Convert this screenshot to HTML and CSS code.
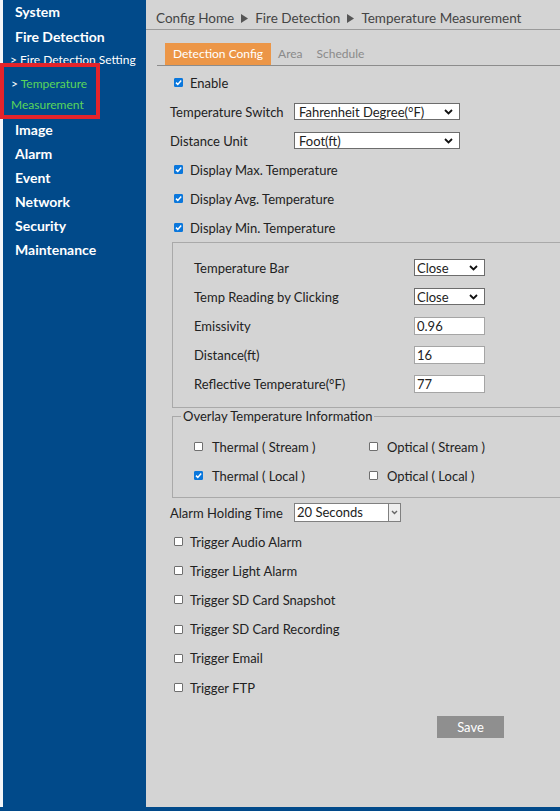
FILE: index.html
```html
<!DOCTYPE html>
<html>
<head>
<meta charset="utf-8">
<link rel="stylesheet" href="styles.css">
</head>
<body>
<div class="page">
  <div class="edge"></div>
  <nav class="sidebar">
    <div class="nav-item nav-first">System</div>
    <div class="nav-item nav-fire">Fire Detection</div>
    <div class="nav-sub">&gt; Fire Detection Setting</div>
    <div class="nav-sub nav-active">&gt; <span class="green">Temperature Measurement</span></div>
    <div class="nav-item nav-image">Image</div>
    <div class="nav-item">Alarm</div>
    <div class="nav-item">Event</div>
    <div class="nav-item">Network</div>
    <div class="nav-item">Security</div>
    <div class="nav-item">Maintenance</div>
  </nav>
  <div class="highlight"></div>
  <main class="content">
    <div class="crumb">
      <span>Config Home</span>
      <svg class="tri" width="7" height="9" viewBox="0 0 7 9"><polygon points="0,0 7,4.5 0,9" fill="#555"/></svg>
      <span>Fire Detection</span>
      <svg class="tri" width="7" height="9" viewBox="0 0 7 9"><polygon points="0,0 7,4.5 0,9" fill="#555"/></svg>
      <span>Temperature Measurement</span>
    </div>
    <div class="tabs">
      <div class="tab tab-active">Detection Config</div>
      <div class="tab">Area</div>
      <div class="tab">Schedule</div>
    </div>
    <div class="form">
      <div class="row"><span class="cb on"><svg width="9" height="9" viewBox="0 0 9 9"><path d="M2 4.6 L3.8 6.4 L7.2 2.6" fill="none" stroke="#fff" stroke-width="1.5"/></svg></span><span class="cbl">Enable</span></div>
      <div class="row"><span class="lbl">Temperature Switch</span><div class="sel sel-wide"><span>Fahrenheit Degree(°F)</span><svg class="chev" width="9" height="6" viewBox="0 0 9 6"><path d="M1 1 L4.5 4.5 L8 1" fill="none" stroke="#111" stroke-width="1.8"/></svg></div></div>
      <div class="row"><span class="lbl">Distance Unit</span><div class="sel sel-wide"><span>Foot(ft)</span><svg class="chev" width="9" height="6" viewBox="0 0 9 6"><path d="M1 1 L4.5 4.5 L8 1" fill="none" stroke="#111" stroke-width="1.8"/></svg></div></div>
      <div class="row"><span class="cb on"><svg width="9" height="9" viewBox="0 0 9 9"><path d="M2 4.6 L3.8 6.4 L7.2 2.6" fill="none" stroke="#fff" stroke-width="1.5"/></svg></span><span class="cbl">Display Max. Temperature</span></div>
      <div class="row"><span class="cb on"><svg width="9" height="9" viewBox="0 0 9 9"><path d="M2 4.6 L3.8 6.4 L7.2 2.6" fill="none" stroke="#fff" stroke-width="1.5"/></svg></span><span class="cbl">Display Avg. Temperature</span></div>
      <div class="row"><span class="cb on"><svg width="9" height="9" viewBox="0 0 9 9"><path d="M2 4.6 L3.8 6.4 L7.2 2.6" fill="none" stroke="#fff" stroke-width="1.5"/></svg></span><span class="cbl">Display Min. Temperature</span></div>

      <div class="box">
        <div class="row"><span class="lbl2">Temperature Bar</span><div class="sel sel-small"><span>Close</span><svg class="chev" width="9" height="6" viewBox="0 0 9 6"><path d="M1 1 L4.5 4.5 L8 1" fill="none" stroke="#111" stroke-width="1.8"/></svg></div></div>
        <div class="row"><span class="lbl2">Temp Reading by Clicking</span><div class="sel sel-small"><span>Close</span><svg class="chev" width="9" height="6" viewBox="0 0 9 6"><path d="M1 1 L4.5 4.5 L8 1" fill="none" stroke="#111" stroke-width="1.8"/></svg></div></div>
        <div class="row"><span class="lbl2">Emissivity</span><div class="inp">0.96</div></div>
        <div class="row"><span class="lbl2">Distance(ft)</span><div class="inp">16</div></div>
        <div class="row"><span class="lbl2">Reflective Temperature(°F)</span><div class="inp">77</div></div>
      </div>

      <fieldset class="overlay">
        <legend>Overlay Temperature Information</legend>
        <div class="grid">
          <div class="row"><span class="cb"></span><span class="cbl2">Thermal ( Stream )</span></div>
          <div class="row"><span class="cb"></span><span class="cbl2">Optical ( Stream )</span></div>
          <div class="row"><span class="cb on"><svg width="9" height="9" viewBox="0 0 9 9"><path d="M2 4.6 L3.8 6.4 L7.2 2.6" fill="none" stroke="#fff" stroke-width="1.5"/></svg></span><span class="cbl2">Thermal ( Local )</span></div>
          <div class="row"><span class="cb"></span><span class="cbl2">Optical ( Local )</span></div>
        </div>
      </fieldset>

      <div class="row"><span class="lbl lbl-alarm">Alarm Holding Time</span><div class="sel-old"><span class="sel-old-text">20 Seconds</span><span class="sel-old-btn"><svg width="7" height="5" viewBox="0 0 7 5"><path d="M1 1 L3.5 3.5 L6 1" fill="none" stroke="#666" stroke-width="1.4"/></svg></span></div></div>
      <div class="row trig"><span class="cb"></span><span class="cbl">Trigger Audio Alarm</span></div>
      <div class="row trig"><span class="cb"></span><span class="cbl">Trigger Light Alarm</span></div>
      <div class="row trig"><span class="cb"></span><span class="cbl">Trigger SD Card Snapshot</span></div>
      <div class="row trig"><span class="cb"></span><span class="cbl">Trigger SD Card Recording</span></div>
      <div class="row trig"><span class="cb"></span><span class="cbl">Trigger Email</span></div>
      <div class="row trig"><span class="cb"></span><span class="cbl">Trigger FTP</span></div>
      <div class="save">Save</div>
    </div>
  </main>
</div>
<div class="bottom"></div>
</body>
</html>
```

FILE: styles.css
```css
* { box-sizing: border-box; }
html, body { margin: 0; padding: 0; }
body {
  width: 560px;
  height: 811px;
  overflow: hidden;
  background: #ffffff;
  font-family: "Lato", "Noto Sans", sans-serif;
  font-size: 13px;
  color: #222;
}
.page {
  display: flex;
  height: 807px;
  position: relative;
}
.edge { width: 3px; background: #f4f6f8; }
.sidebar {
  width: 143px;
  background: #014a8a;
  color: #fff;
  padding-right: 6px;
}
.nav-item {
  font-weight: bold;
  font-size: 14px;
  line-height: 24px;
  height: 24px;
  padding-left: 12px;
  white-space: nowrap;
}
.nav-fire { height: 25px; line-height: 25px; }
.nav-sub {
  font-size: 12px;
  line-height: 22px;
  height: 22px;
  padding-left: 7px;
  white-space: nowrap;
}
.nav-active {
  white-space: normal;
  line-height: 21px;
  height: 42px;
  margin-top: 2px;
  padding-left: 8px;
  width: 110px;
}
.green { color: #5ad65a; }
.nav-image { margin-top: 3px; }
.highlight {
  position: absolute;
  left: 0;
  top: 63px;
  width: 100px;
  height: 56px;
  border: 4px solid #e3242b;
}
.content {
  flex: 1;
  background: #d4d4d4;
  overflow: hidden;
}
.crumb {
  height: 30px;
  border-bottom: 1px solid #9a9a9a;
  display: flex;
  align-items: center;
  gap: 7px;
  padding: 6px 0 0 10px;
  font-size: 13.5px;
  color: #444;
  white-space: nowrap;
}
.tri { margin-top: 1px; }
.tabs {
  margin: 13px 0 0 11px;
  padding-left: 8px;
  display: flex;
  height: 23px;
  border-bottom: 1px solid #8c8c8c;
}
.tab {
  padding: 0 7px;
  line-height: 22px;
  font-size: 12px;
  color: #8a8a8a;
}
.tab-active {
  background: #ec9647;
  color: #fff;
  padding: 0 8px;
}
.form { padding: 2px 0 0 24px; }
.row {
  display: flex;
  align-items: center;
  height: 29px;
  white-space: nowrap;
}
.trig { height: 29.2px; }
.cb {
  width: 9px;
  height: 9px;
  margin-left: 4px;
  background: #fff;
  border: 1px solid #6f6f6f;
  border-radius: 1px;
  flex: none;
  position: relative;
}
.cb.on { background: #0a77dc; border-color: #0a77dc; }
.cb svg { position: absolute; left: -1px; top: -1px; }
.cbl { margin-left: 7px; }
.lbl { width: 124px; }
.lbl-alarm { width: 124px; }
.sel {
  background: #fff;
  border: 1px solid #6c6c6c;
  height: 17px;
  display: flex;
  align-items: center;
  justify-content: space-between;
  padding: 0 6px 0 4px;
}
.sel-wide { width: 166px; }
.sel-small { width: 71px; padding-left: 2px; }
.box {
  margin-left: 2px;
  width: 420px;
  border: 1px solid #a9a9a9;
  padding: 10px 0 9px 21px;
}
.lbl2 { width: 220px; }
.inp {
  width: 71px;
  height: 18px;
  background: #fff;
  border: 1px solid #a5a5a5;
  padding-left: 2px;
  line-height: 16px;
}
.overlay {
  margin: 0 0 0 2px;
  width: 420px;
  border: 1px solid #a9a9a9;
  padding: 7px 0 7px 8px;
}
.overlay legend {
  padding: 0 2px;
  line-height: 17px;
  color: #222;
}
.grid {
  display: grid;
  grid-template-columns: 175px 175px;
  padding-left: 13px;
}
.grid .cb { margin-left: 0; }
.cbl2 { margin-left: 9px; }
.sel-old {
  width: 107px;
  height: 19px;
  background: #fff;
  border: 1px solid #808080;
  display: flex;
}
.sel-old-text { flex: 1; padding-left: 2px; line-height: 17px; }
.sel-old-btn {
  width: 12px;
  border-left: 1px solid #808080;
  background: #eeeeee;
  display: flex;
  align-items: center;
  justify-content: center;
}
.save {
  margin: 14px 0 0 267px;
  width: 67px;
  height: 22px;
  background: #8f8f8f;
  color: #fff;
  text-align: center;
  line-height: 22px;
  font-size: 13px;
}
.bottom { height: 4px; background: #014a8a; }
```
